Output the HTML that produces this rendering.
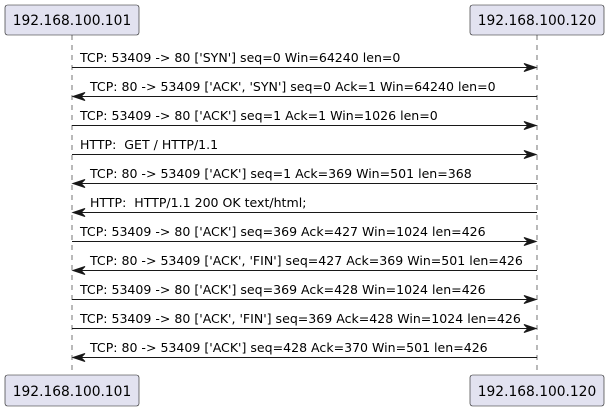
<!DOCTYPE html><html><head><style>body{margin:0;background:#fff}</style></head><body>
<svg width="609" height="411" xmlns="http://www.w3.org/2000/svg" font-family="DejaVu Sans, Liberation Sans, sans-serif">
<g stroke="#181818" stroke-width="0.6" stroke-dasharray="5,5"><line x1="72" y1="35" x2="72" y2="375"/><line x1="537" y1="35" x2="537" y2="375"/></g>
<g fill="#E2E2F0" stroke="#181818" stroke-width="0.6">
<rect x="5" y="5" width="134" height="30" rx="2.5"/><rect x="470" y="5" width="134" height="30" rx="2.5"/>
<rect x="5" y="375" width="134" height="31" rx="2.5"/><rect x="470" y="375" width="134" height="31" rx="2.5"/></g>
<g font-size="13.8" fill="#000" text-anchor="middle">
<text x="72" y="25">192.168.100.101</text><text x="537" y="25">192.168.100.120</text>
<text x="72" y="396">192.168.100.101</text><text x="537" y="396">192.168.100.120</text></g>
<g stroke="#181818" stroke-width="1" fill="#181818" font-size="12.55">
<line x1="72" y1="67.5" x2="536" y2="67.5"/><polygon points="536,67.5 524,63.5 528,67.5 524,71.5"/>
<text x="80" y="62" stroke="none" fill="#000">TCP: 53409 -&gt; 80 ['SYN'] seq=0 Win=64240 len=0</text>
<line x1="73" y1="96.5" x2="537" y2="96.5"/><polygon points="73,96.5 85,92.5 81,96.5 85,100.5"/>
<text x="90" y="91" stroke="none" fill="#000">TCP: 80 -&gt; 53409 ['ACK', 'SYN'] seq=0 Ack=1 Win=64240 len=0</text>
<line x1="72" y1="125.5" x2="536" y2="125.5"/><polygon points="536,125.5 524,121.5 528,125.5 524,129.5"/>
<text x="80" y="120" stroke="none" fill="#000">TCP: 53409 -&gt; 80 ['ACK'] seq=1 Ack=1 Win=1026 len=0</text>
<line x1="72" y1="154.5" x2="536" y2="154.5"/><polygon points="536,154.5 524,150.5 528,154.5 524,158.5"/>
<text x="80" y="149" stroke="none" fill="#000" xml:space="preserve">HTTP:  GET / HTTP/1.1</text>
<line x1="73" y1="183.5" x2="537" y2="183.5"/><polygon points="73,183.5 85,179.5 81,183.5 85,187.5"/>
<text x="90" y="178" stroke="none" fill="#000">TCP: 80 -&gt; 53409 ['ACK'] seq=1 Ack=369 Win=501 len=368</text>
<line x1="73" y1="212.5" x2="537" y2="212.5"/><polygon points="73,212.5 85,208.5 81,212.5 85,216.5"/>
<text x="90" y="207" stroke="none" fill="#000" xml:space="preserve">HTTP:  HTTP/1.1 200 OK text/html;</text>
<line x1="72" y1="241.5" x2="536" y2="241.5"/><polygon points="536,241.5 524,237.5 528,241.5 524,245.5"/>
<text x="80" y="236" stroke="none" fill="#000">TCP: 53409 -&gt; 80 ['ACK'] seq=369 Ack=427 Win=1024 len=426</text>
<line x1="73" y1="270.5" x2="537" y2="270.5"/><polygon points="73,270.5 85,266.5 81,270.5 85,274.5"/>
<text x="90" y="265" stroke="none" fill="#000">TCP: 80 -&gt; 53409 ['ACK', 'FIN'] seq=427 Ack=369 Win=501 len=426</text>
<line x1="72" y1="299.5" x2="536" y2="299.5"/><polygon points="536,299.5 524,295.5 528,299.5 524,303.5"/>
<text x="80" y="294" stroke="none" fill="#000">TCP: 53409 -&gt; 80 ['ACK'] seq=369 Ack=428 Win=1024 len=426</text>
<line x1="72" y1="328.5" x2="536" y2="328.5"/><polygon points="536,328.5 524,324.5 528,328.5 524,332.5"/>
<text x="80" y="323" stroke="none" fill="#000">TCP: 53409 -&gt; 80 ['ACK', 'FIN'] seq=369 Ack=428 Win=1024 len=426</text>
<line x1="73" y1="357.5" x2="537" y2="357.5"/><polygon points="73,357.5 85,353.5 81,357.5 85,361.5"/>
<text x="90" y="352" stroke="none" fill="#000">TCP: 80 -&gt; 53409 ['ACK'] seq=428 Ack=370 Win=501 len=426</text>
</g>
</svg></body></html>
